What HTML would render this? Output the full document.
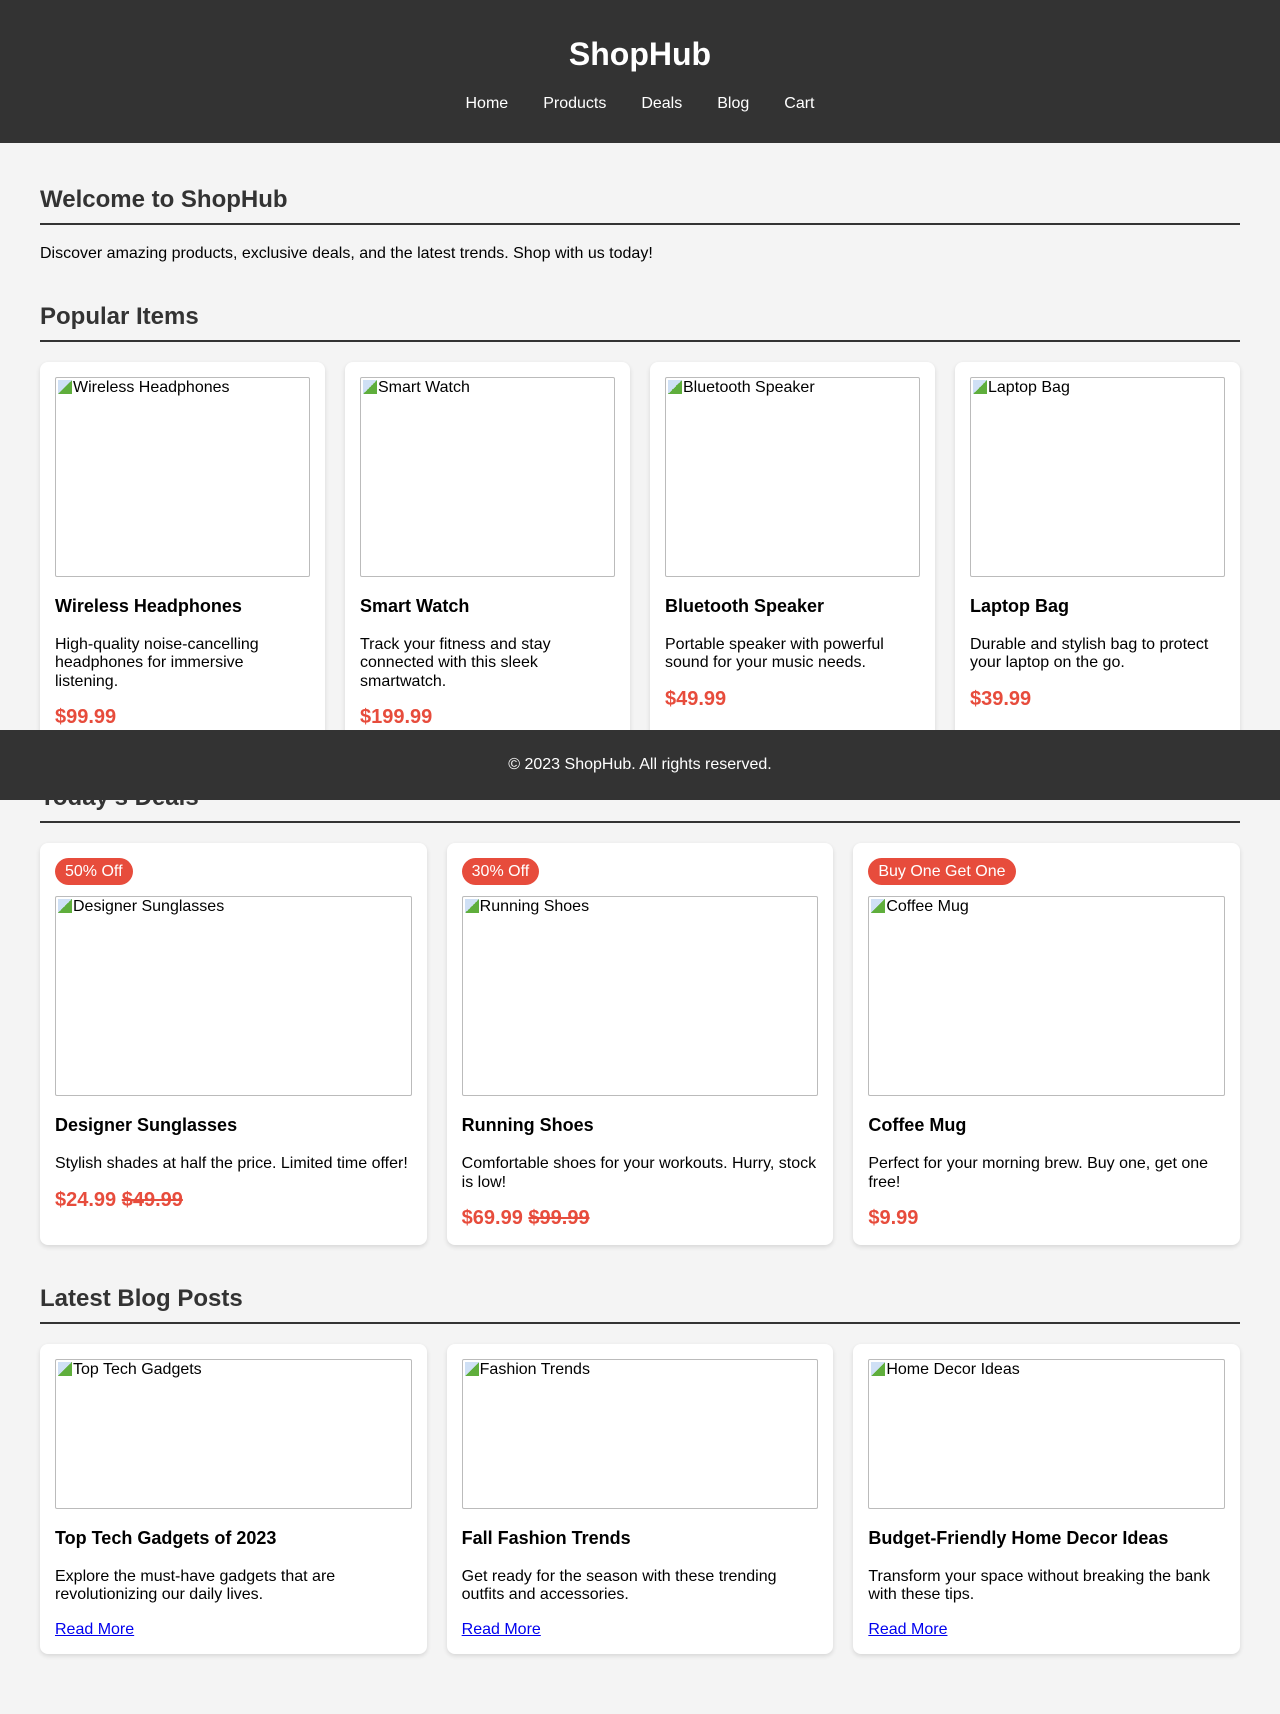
<!DOCTYPE html>
<html><head><meta charset="utf-8"><style>
*{box-sizing:border-box}
html,body{margin:0;padding:0}
body{width:1280px;height:1714px;overflow:hidden;position:relative;background:#f4f4f4;font-family:"Liberation Sans",Arial,sans-serif;font-size:16px;color:#000}
header{background:#333;color:#fff;height:143px;text-align:center;padding-top:36px}
header h1{margin:0;font-size:32px;line-height:37px}
nav{display:flex;justify-content:center;gap:35px;margin-top:22px;line-height:18px}
nav a{color:#fff;text-decoration:none}
main{padding:43px 40px 0}
h2{margin:0;font-size:24px;line-height:28px;color:#333;padding-bottom:9px;border-bottom:2px solid #333}
.intro{margin:20px 0 40px;line-height:18px}
.grid{display:grid;gap:20px;margin-top:20px;margin-bottom:40px}
.g4{grid-template-columns:repeat(4,1fr)}
.g3{grid-template-columns:repeat(3,1fr)}
.card{background:#fff;border-radius:8px;padding:15px;box-shadow:0 2px 5px rgba(0,0,0,.12)}
.img{height:200px;border:1px solid #bbb;border-radius:2px;padding:1px 0 0 2px;line-height:18px;position:relative}
.img:before{content:"";display:inline-block;width:14px;height:14px;vertical-align:-2px;background:linear-gradient(135deg,#cfe0f5 50%,#5fae3c 50%);margin-right:1px}
.img.s{height:150px}
h3{margin:19px 0 19px;font-size:18px;line-height:21px}
p{margin:15px 0;line-height:18.4px}
.blog p{margin-bottom:16px}
.price{color:#e74c3c;font-weight:bold;font-size:20px;line-height:23px;margin-bottom:0}
.price s{color:#e74c3c}
.badge{display:inline-block;background:#e74c3c;color:#fff;padding:4px 10px;border-radius:14px;line-height:19px;margin:0 0 11px}
.card a{color:#0000ee;line-height:18px}
footer{position:absolute;left:0;top:730px;width:1280px;height:70px;background:#333;color:#fff;text-align:center;line-height:70px}
</style></head><body>
<header><h1>ShopHub</h1><nav><a>Home</a><a>Products</a><a>Deals</a><a>Blog</a><a>Cart</a></nav></header>
<main>
<h2>Welcome to ShopHub</h2>
<p class="intro">Discover amazing products, exclusive deals, and the latest trends. Shop with us today!</p>
<h2>Popular Items</h2>
<div class="grid g4">
<div class="card"><div class="img">Wireless Headphones</div><h3>Wireless Headphones</h3><p>High-quality noise-cancelling headphones for immersive listening.</p><p class="price">$99.99</p></div>
<div class="card"><div class="img">Smart Watch</div><h3>Smart Watch</h3><p>Track your fitness and stay connected with this sleek smartwatch.</p><p class="price">$199.99</p></div>
<div class="card"><div class="img">Bluetooth Speaker</div><h3>Bluetooth Speaker</h3><p>Portable speaker with powerful sound for your music needs.</p><p class="price">$49.99</p></div>
<div class="card"><div class="img">Laptop Bag</div><h3>Laptop Bag</h3><p>Durable and stylish bag to protect your laptop on the go.</p><p class="price">$39.99</p></div>
</div>
<h2>Today's Deals</h2>
<div class="grid g3">
<div class="card"><span class="badge">50% Off</span><div class="img">Designer Sunglasses</div><h3>Designer Sunglasses</h3><p>Stylish shades at half the price. Limited time offer!</p><p class="price">$24.99 <s>$49.99</s></p></div>
<div class="card"><span class="badge">30% Off</span><div class="img">Running Shoes</div><h3>Running Shoes</h3><p>Comfortable shoes for your workouts. Hurry, stock is low!</p><p class="price">$69.99 <s>$99.99</s></p></div>
<div class="card"><span class="badge">Buy One Get One</span><div class="img">Coffee Mug</div><h3>Coffee Mug</h3><p>Perfect for your morning brew. Buy one, get one free!</p><p class="price">$9.99</p></div>
</div>
<h2>Latest Blog Posts</h2>
<div class="grid g3 blog">
<div class="card"><div class="img s">Top Tech Gadgets</div><h3>Top Tech Gadgets of 2023</h3><p>Explore the must-have gadgets that are revolutionizing our daily lives.</p><a href="#">Read More</a></div>
<div class="card"><div class="img s">Fashion Trends</div><h3>Fall Fashion Trends</h3><p>Get ready for the season with these trending outfits and accessories.</p><a href="#">Read More</a></div>
<div class="card"><div class="img s">Home Decor Ideas</div><h3>Budget-Friendly Home Decor Ideas</h3><p>Transform your space without breaking the bank with these tips.</p><a href="#">Read More</a></div>
</div>
</main>
<footer>© 2023 ShopHub. All rights reserved.</footer>
</body></html>
